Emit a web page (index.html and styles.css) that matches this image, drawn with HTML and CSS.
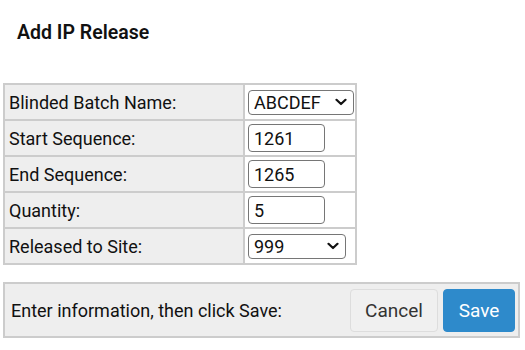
FILE: index.html
```html
<!DOCTYPE html>
<html lang="en">
<head>
  <meta charset="UTF-8">
  <meta name="viewport" content="width=device-width, initial-scale=1.0">
  <title>Add IP Release</title>
  <link rel="stylesheet" href="styles.css">
</head>
<body>
  <div class="page">
    <h1 class="title">Add IP Release</h1>

    <table class="release-form">
      <tr>
        <td class="label">Blinded Batch Name:</td>
        <td class="field">
          <select class="batch-select">
            <option>ABCDEF</option>
          </select>
        </td>
      </tr>
      <tr>
        <td class="label">Start Sequence:</td>
        <td class="field"><input type="text" class="num-input" value="1261"></td>
      </tr>
      <tr>
        <td class="label">End Sequence:</td>
        <td class="field"><input type="text" class="num-input" value="1265"></td>
      </tr>
      <tr>
        <td class="label">Quantity:</td>
        <td class="field"><input type="text" class="num-input" value="5"></td>
      </tr>
      <tr>
        <td class="label">Released to Site:</td>
        <td class="field">
          <select class="site-select">
            <option>999</option>
          </select>
        </td>
      </tr>
    </table>

    <div class="actions">
      <span class="hint">Enter information, then click Save:</span>
      <div class="buttons">
        <button class="btn btn-cancel">Cancel</button>
        <button class="btn btn-save">Save</button>
      </div>
    </div>
  </div>
</body>
</html>
```

FILE: styles.css
```css
body {
  font-family: Roboto, "Liberation Sans", Arial, sans-serif;
  background-color: #fff;
  color: #111;
  margin: 0;
  padding: 0;
}

.page {
  padding: 0 5px 0 3px;
}

.title {
  font-size: 19.5px;
  font-weight: 600;
  margin: 0;
  padding: 23px 0 0 14px;
  line-height: 20px;
}

.release-form {
  margin-top: 40px;
  border: 1px solid #ccc;
  border-spacing: 0;
  width: 354px;
  font-size: 18px;
}

.release-form td {
  border: 1px solid #ccc;
  height: 34px;
  padding: 0 4px;
}

.label {
  background-color: #eee;
}

.release-form .field {
  background-color: #fff;
  width: 106px;
  padding: 0 1px 0 3px;
}

select,
input[type="text"] {
  font-family: inherit;
  font-size: 18px;
  color: #111;
  border: 1px solid #767676;
  border-radius: 4px;
  background-color: #fff;
  box-sizing: border-box;
}

select {
  appearance: none;
  -webkit-appearance: none;
  background-image: url("data:image/svg+xml,%3Csvg xmlns='http://www.w3.org/2000/svg' width='12' height='8' viewBox='0 0 12 8'%3E%3Cpath d='M1.5 1.8 L6 6 L10.5 1.8' fill='none' stroke='%23111' stroke-width='2.2' stroke-linecap='round' stroke-linejoin='round'/%3E%3C/svg%3E");
  background-repeat: no-repeat;
  background-size: 12px 8px;
  background-position: right 6px center;
}

.batch-select {
  width: 106px;
  height: 25px;
  padding: 0 22px 0 5px;
}

.site-select {
  width: 98px;
  height: 25px;
  padding: 0 22px 0 5px;
}

.num-input {
  width: 77px;
  height: 28px;
  padding: 0 5px;
}

.actions {
  margin-top: 17px;
  width: 517px;
  box-sizing: border-box;
  border: 2px solid #ccc;
  background-color: #eee;
  display: flex;
  align-items: center;
  justify-content: space-between;
  padding: 5px 3px 4px 6px;
}

.hint {
  font-size: 18px;
}

.buttons {
  display: flex;
  gap: 5px;
}

.btn {
  font-family: inherit;
  font-size: 19px;
  height: 43px;
  border-radius: 4px;
  cursor: pointer;
}

.btn-cancel {
  width: 88px;
  background-color: #f0f0f0;
  border: 1px solid #ddd;
  color: #333;
}

.btn-save {
  width: 72px;
  background-color: #2e8acb;
  border: 1px solid #2e8acb;
  color: #fff;
}
```
